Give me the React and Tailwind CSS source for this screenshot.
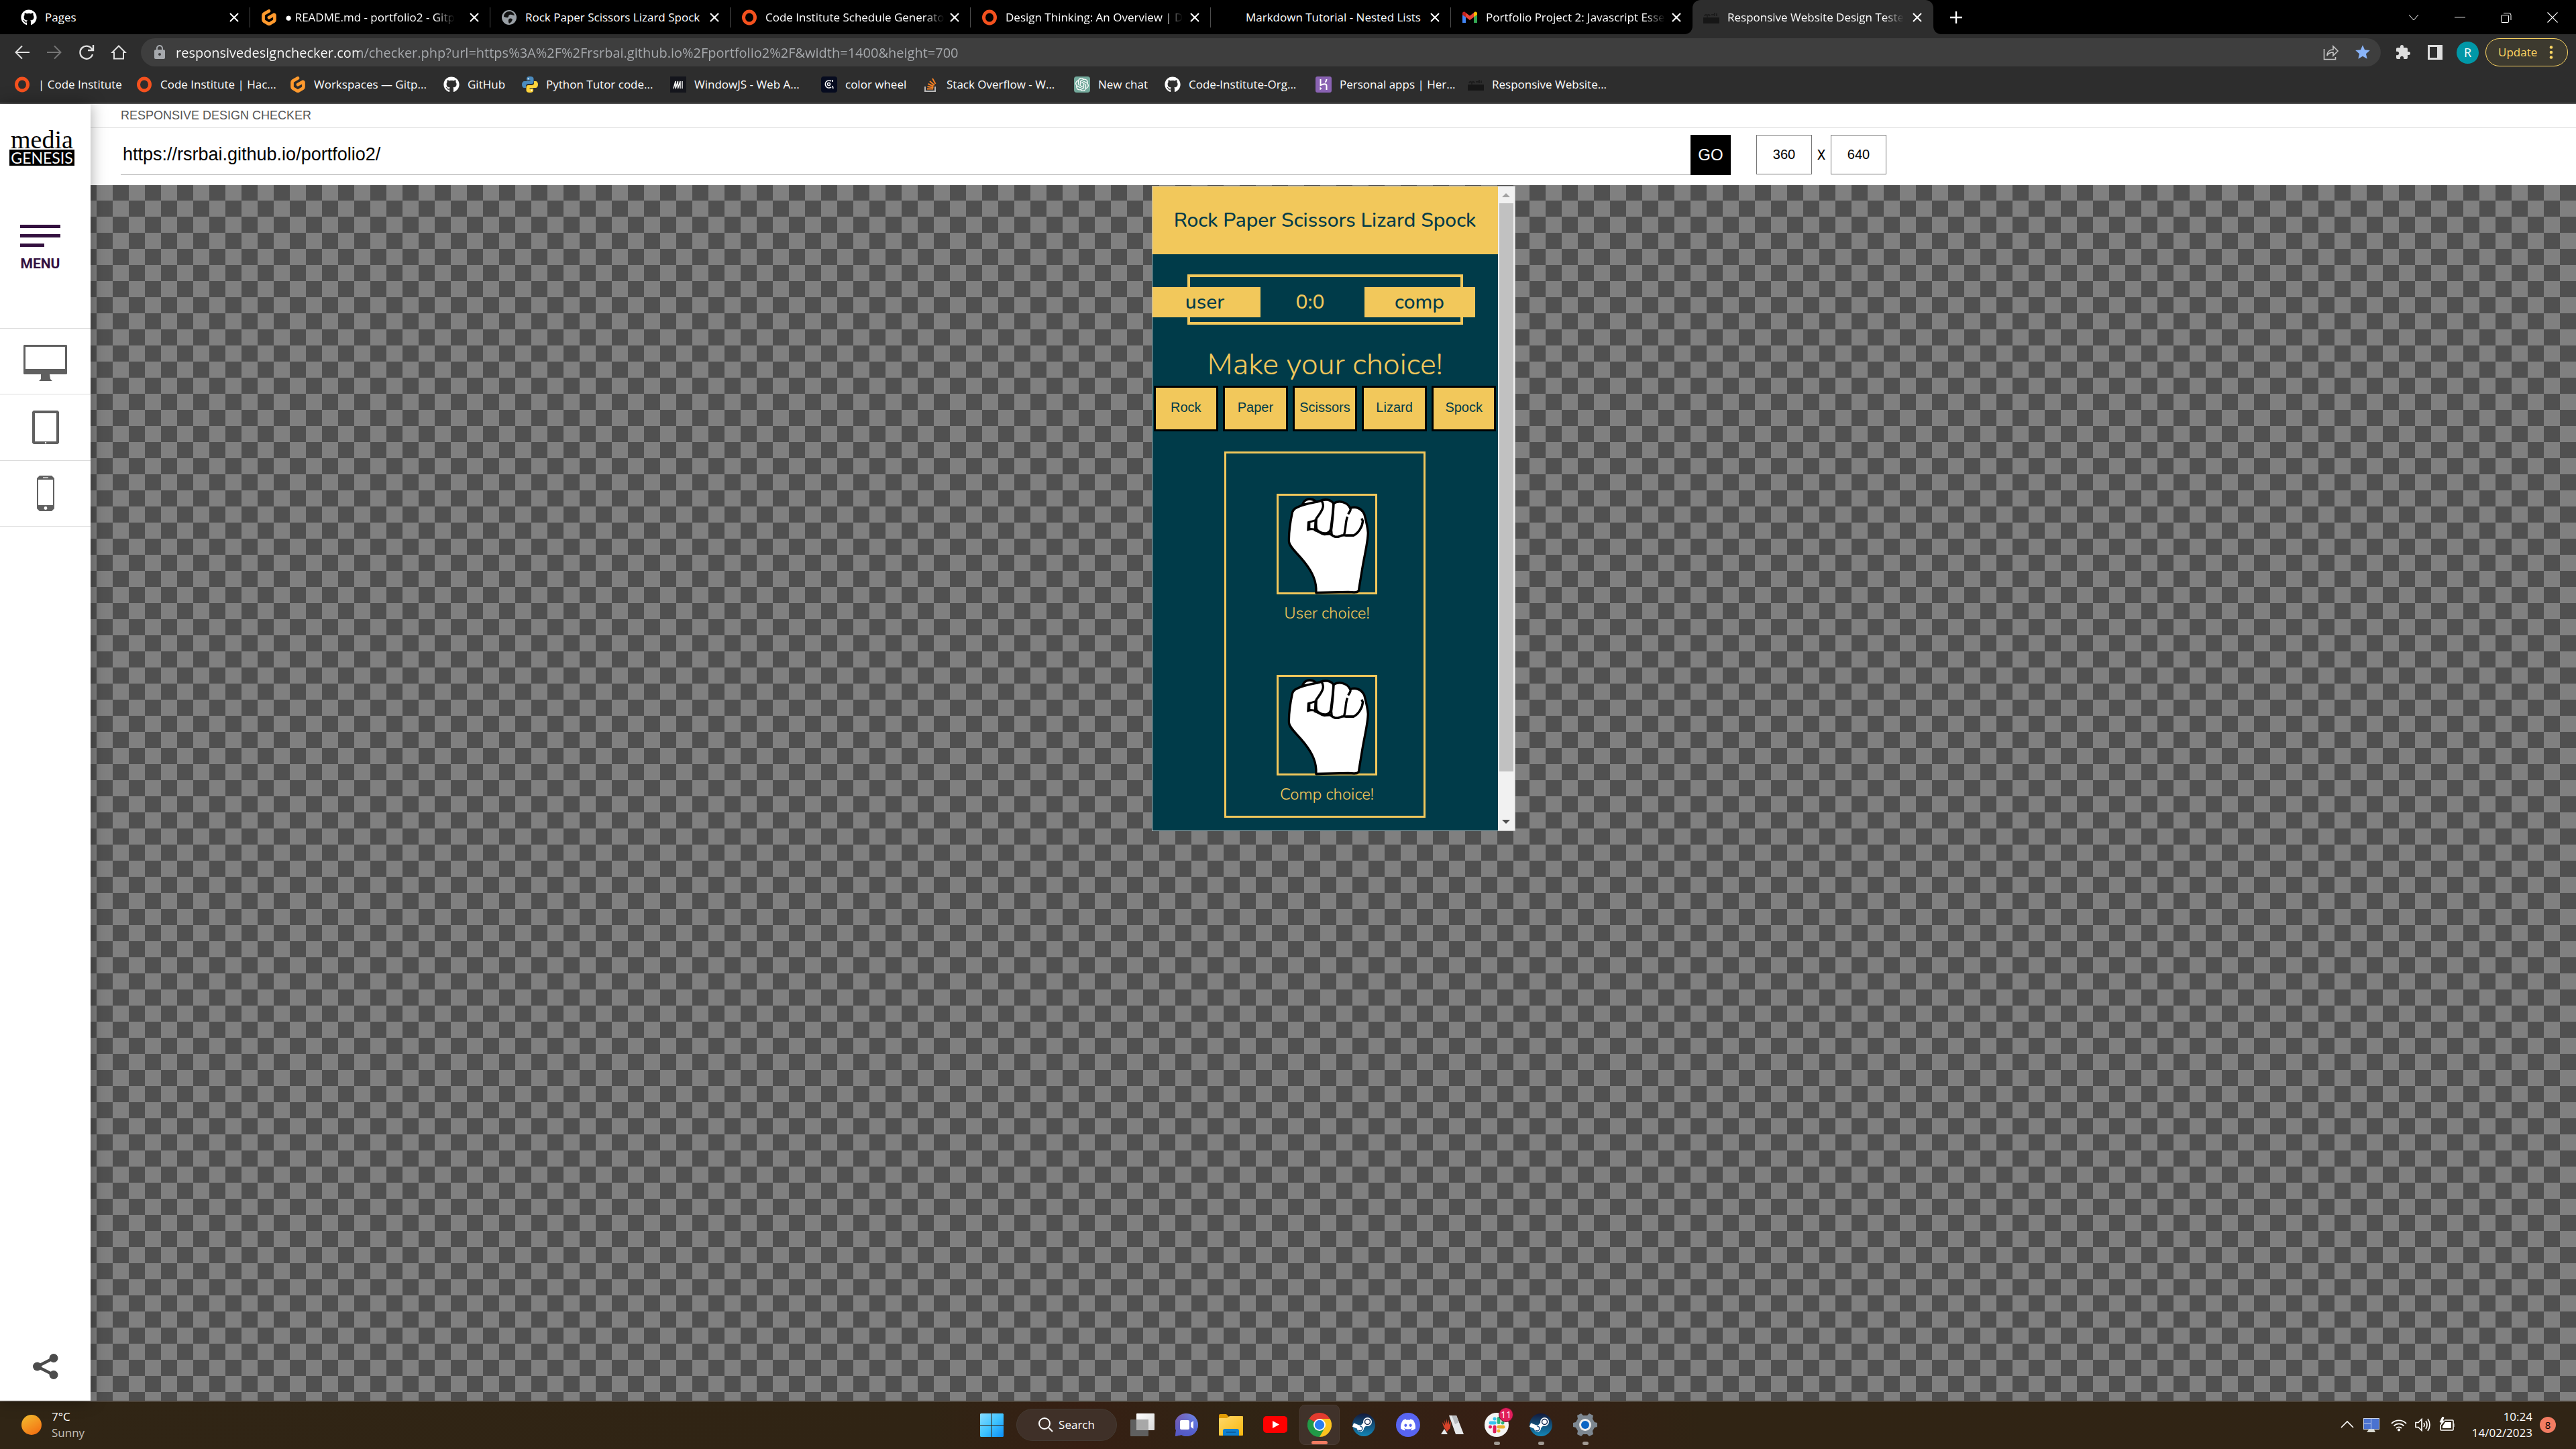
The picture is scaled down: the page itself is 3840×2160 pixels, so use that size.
import React from "react";
import { FaGithub, FaDiscord } from "react-icons/fa";
import { SiOpenai, SiGitpod } from "react-icons/si";
import { MdExtension, MdStar, MdLock } from "react-icons/md";

const UI = "font-['Segoe_UI','Open_Sans',sans-serif]";

/* ---------- favicons ---------- */
const Ring = () => (
  <svg viewBox="0 0 24 24" className="size-6 shrink-0">
    <ellipse cx="12" cy="12" rx="8.5" ry="9" fill="none" stroke="#f4511e" strokeWidth="5" />
  </svg>
);
const Github = () => <FaGithub className="size-6 shrink-0 text-white" />;
const Gitpod = () => <SiGitpod className="size-6 shrink-0 text-[#ff9a2e]" />;
const Globe = () => (
  <svg viewBox="0 0 24 24" className="size-6 shrink-0">
    <circle cx="12" cy="12" r="11" fill="#9aa0a6" />
    <path d="M12 3c4 0 7 2 8 6-3 0-4-2-7-1s-1 3-3 4-4-1-6-1c0-5 4-8 8-8zM12 14c3-1 4 0 5 1-1 3-2 4-5 6-1-2-2-5 0-7z" fill="#111" />
  </svg>
);
const Python = () => (
  <svg viewBox="0 0 24 24" className="size-6 shrink-0">
    <path d="M12 0C8 0 7 1.500 7 3.500V6h5.500v1H4C1.500 7 0 9 0 12s1.500 5 3.500 5H6v-3c0-2 1.500-3 3.500-3h5c2 0 3-1.500 3-3V3.500C17.500 1.500 16 0 12 0z" fill="#4b8bbe" />
    <path d="M12 24c4 0 5-1.500 5-3.500V18h-5.500v-1H20c2.500 0 4-2 4-5s-1.500-5-3.500-5H18v3c0 2-1.500 3-3.500 3h-5c-2 0-3 1.500-3 3v4.500C6.500 22.500 8 24 12 24z" fill="#ffd43b" />
    <circle cx="9.500" cy="3.500" r="1" fill="#fff" />
    <circle cx="14.500" cy="20.500" r="1" fill="#fff" />
  </svg>
);
const WindowJs = () => (
  <svg viewBox="0 0 24 24" className="size-6 shrink-0">
    <rect width="24" height="24" fill="#14151c" />
    <path d="M5 18 8 7v11l3.500-11v11L15 7v11M18 7v11" fill="none" stroke="#fff" strokeWidth="1.400" />
  </svg>
);
const Wheel = () => (
  <svg viewBox="0 0 24 24" className="size-6 shrink-0">
    <rect width="24" height="24" rx="4" fill="#060b1f" />
    <path d="M15 7a5.500 5.500 0 1 0 0 9M17 5v3M17 14l1 4" fill="none" stroke="#fff" strokeWidth="1.600" />
    <circle cx="11.500" cy="11.500" r="2" fill="none" stroke="#fff" strokeWidth="1.400" />
  </svg>
);
const Stack = () => (
  <svg viewBox="0 0 24 24" className="size-6 shrink-0" fill="none">
    <path d="M4 15v7h15v-7" stroke="#bcbbbb" strokeWidth="2" />
    <path d="M7 18.500h9M7.500 15l9 1.500M8.500 11l8 3.500M11 7l7 6M15 3l4.500 8" stroke="#f48024" strokeWidth="2" />
  </svg>
);
const Chat = () => (
  <span className="flex size-6 shrink-0 items-center justify-center rounded-sm bg-[#74aa9c]">
    <SiOpenai className="size-5 text-white" />
  </span>
);
const Heroku = () => (
  <svg viewBox="0 0 24 24" className="size-6 shrink-0">
    <rect width="24" height="24" rx="3" fill="#8a63b3" />
    <path d="M7.500 4v9c4-2 9-3 9 1v6M16.500 4c0 2-.8 3.500-2 5" fill="none" stroke="#fff" strokeWidth="2" />
    <path d="M6.500 15.500v5l3-2.500z" fill="#fff" />
  </svg>
);
const Media = () => (
  <svg viewBox="0 0 24 24" className="size-6 shrink-0">
    <path d="M2 10c1-3 3-3 4 0 1-3 3-3 4 0M12 8h4M17 5v5M20 6v4" stroke="#1c1c1c" strokeWidth="2" fill="none" />
    <rect y="12" width="24" height="9" fill="#161616" />
  </svg>
);
const Gmail = () => (
  <svg viewBox="0 0 24 24" className="size-6 shrink-0">
    <path d="M1 8v12h5V11z" fill="#4285f4" />
    <path d="M18 11v9h5V8z" fill="#34a853" />
    <path d="M1 8V6c0-2 2-3 4-2l1 1v6.500z" fill="#c5221f" />
    <path d="M18 5l1-1c2-1 4 0 4 2v2l-5 3.500z" fill="#fbbc04" />
    <path d="M6 5l6 4.500L18 5v6.500L12 16l-6-4.500z" fill="#ea4335" />
  </svg>
);
const Blank = () => <span className="size-6 shrink-0" />;

const tabs = [
  { icon: Github, title: "Pages" },
  { icon: Gitpod, title: "● README.md - portfolio2 - Gitp", fade: true },
  { icon: Globe, title: "Rock Paper Scissors Lizard Spock" },
  { icon: Ring, title: "Code Institute Schedule Generato", fade: true },
  { icon: Ring, title: "Design Thinking: An Overview | D", fade: true },
  { icon: Blank, title: "Markdown Tutorial - Nested Lists" },
  { icon: Gmail, title: "Portfolio Project 2: Javascript Esse", fade: true, last: true },
  { icon: Media, title: "Responsive Website Design Teste", fade: true, active: true },
];

const bookmarks = [
  { icon: Ring, title: "| Code Institute", w: "w-[182px]" },
  { icon: Ring, title: "Code Institute | Hac...", w: "w-[229px]" },
  { icon: Gitpod, title: "Workspaces — Gitp...", w: "w-[229px]" },
  { icon: Github, title: "GitHub", w: "w-[117px]" },
  { icon: Python, title: "Python Tutor code...", w: "w-[221px]" },
  { icon: WindowJs, title: "WindowJS - Web A...", w: "w-[225px]" },
  { icon: Wheel, title: "color wheel", w: "w-[151px]" },
  { icon: Stack, title: "Stack Overflow - W...", w: "w-[226px]" },
  { icon: Chat, title: "New chat", w: "w-[135px]" },
  { icon: Github, title: "Code-Institute-Org...", w: "w-[225px]" },
  { icon: Heroku, title: "Personal apps | Her...", w: "w-[227px]" },
  { icon: Media, title: "Responsive Website...", w: "w-[227px]" },
];

function CloseX() {
  return (
    <svg viewBox="0 0 14 14" className="size-3.5">
      <path d="M1 1l12 12M13 1 1 13" stroke="#fff" strokeWidth="2" />
    </svg>
  );
}

function Tab({ icon: Icon, title, active, last, fade }) {
  const size = active
    ? "relative w-[359px] rounded-t-xl bg-[#2d2d2d]"
    : last
      ? "w-[360px]"
      : "w-[358px]";
  return (
    <div className={"flex h-[51px] items-center justify-between " + size}>
      {active && (
        <>
          <svg viewBox="0 0 12 12" className="absolute bottom-0 -left-3 size-3">
            <path d="M12 0v12H0C7 12 12 7 12 0z" fill="#2d2d2d" />
          </svg>
          <svg viewBox="0 0 12 12" className="absolute -right-3 bottom-0 size-3">
            <path d="M0 0v12h12C5 12 0 7 0 0z" fill="#2d2d2d" />
          </svg>
        </>
      )}
      <button className="flex items-center gap-3 pl-4 text-left text-white">
        <Icon />
        <span
          className={
            fade
              ? "text-[17px] leading-6 whitespace-nowrap [mask-image:linear-gradient(90deg,#000_calc(100%-30px),transparent)]"
              : "text-[17px] leading-6 whitespace-nowrap"
          }
        >
          {title}
        </span>
      </button>
      <div className="flex items-center">
        <button aria-label={"Close " + title} className="mr-4">
          <CloseX />
        </button>
        <span className={active || last ? "h-[30px] w-px" : "h-[30px] w-px bg-[#4d4d4d]"} />
      </div>
    </div>
  );
}

function Stroke({ d, box = "0 0 24 24", className = "size-6", w = 2, color = "#e0e0e0" }) {
  return (
    <svg viewBox={box} className={className}>
      <path d={d} fill="none" stroke={color} strokeWidth={w} />
    </svg>
  );
}

function Browser() {
  return (
    <header className={"bg-[#2d2d2d] " + UI}>
      <div className="flex h-[51px] items-center bg-black pl-[15px]">
        {tabs.map((t) => (
          <Tab key={t.title} {...t} />
        ))}
        <button aria-label="New tab" className="ml-6">
          <Stroke d="M10 1v18M1 10h18" box="0 0 20 20" className="size-5" w={2.4} color="#fff" />
        </button>
        <div className="mr-[27px] ml-auto flex items-center gap-[53px]">
          <button aria-label="Search tabs">
            <Stroke d="M1 4l7 8 7-8" box="0 0 16 16" className="size-4" w={1} color="#fff" />
          </button>
          <button aria-label="Minimize">
            <Stroke d="M0 7.500h16" box="0 0 16 16" className="size-4" w={1} color="#fff" />
          </button>
          <button aria-label="Restore">
            <Stroke d="M1.500 4.500h9a1 1 0 0 1 1 1v9a1 1 0 0 1-1 1h-9a1 1 0 0 1-1-1v-9a1 1 0 0 1 1-1zM4 1.500h8a3 3 0 0 1 3 3V12" box="0 0 16 16" className="size-4" w={1} color="#fff" />
          </button>
          <button aria-label="Close window">
            <Stroke d="M.5.5l15 15M15.500.5l-15 15" box="0 0 16 16" className="size-4" w={1.2} color="#fff" />
          </button>
        </div>
      </div>

      <div className="flex h-[54px] items-center pr-3 pl-[21px]">
        <div className="flex w-[189px] items-center gap-6">
          <button aria-label="Back">
            <Stroke d="M12 2.500 2.500 12l9.500 9.500M3 12h20" />
          </button>
          <button aria-label="Forward">
            <Stroke d="M12 2.500 21.500 12 12 21.500M21 12H1" color="#757575" />
          </button>
          <button aria-label="Reload">
            <Stroke d="M20.500 8A9.500 9.500 0 1 0 21 15M22 1v8h-8" w={2.4} />
          </button>
          <button aria-label="Home">
            <Stroke d="M2.500 12 12 2.500l9.500 9.500H19v9.500H5V12z" />
          </button>
        </div>
        <div className="flex h-[42px] flex-1 items-center rounded-full bg-[#3e3e3e] pr-3.5 pl-4">
          <MdLock className="size-6 text-[#a6a9ad]" />
          <input
            aria-label="Address and search bar"
            defaultValue="responsivedesignchecker.com/checker.php?url=https%3A%2F%2Frsrbai.github.io%2Fportfolio2%2F&width=1400&height=700"
            className="ml-3 h-full min-w-0 flex-1 bg-[linear-gradient(90deg,#fff_274px,#a9acb0_274px)] bg-clip-text text-[20px] text-transparent outline-none"
          />
          <div className="flex items-center gap-[22px]">
            <button aria-label="Share">
              <Stroke d="M1.500 7v15.500h17V19M6 17c0-6 4-9 9-9V3l7 7-7 7v-5c-4 0-7 1-9 5z" w={1.6} color="#c7c7c7" />
            </button>
            <button aria-label="Bookmark this tab">
              <MdStar className="size-[26px] text-[#8ab4f8]" />
            </button>
          </div>
        </div>
        <div className="ml-[21px] flex items-center gap-6">
          <button aria-label="Extensions">
            <MdExtension className="size-6 text-[#dedede]" />
          </button>
          <button aria-label="Side panel">
            <svg viewBox="0 0 24 24" className="size-6">
              <path d="M1 1h22v22H1zM4 4v16h11V4z" fillRule="evenodd" fill="#dedede" />
            </svg>
          </button>
          <button className="-ml-1 flex size-[33px] items-center justify-center rounded-full bg-[#0097a7] text-[18px] leading-6 text-white">R</button>
        </div>
        <button className="ml-2.5 flex h-[42px] w-[123px] items-center gap-[18px] rounded-full border border-[#fdd663] bg-[#3d3a2f] pl-[18px] text-[17px] text-[#fdd663]">
          <span>Update</span>
          <svg viewBox="0 0 6 20" className="h-5 w-1.5" fill="#fdd663">
            <circle cx="3" cy="2.500" r="2.300" />
            <circle cx="3" cy="10" r="2.300" />
            <circle cx="3" cy="17.500" r="2.300" />
          </svg>
        </button>
      </div>

      <nav className="flex h-[50px] items-center border-b-2 border-[#505050] pb-1.5 pl-[21px]">
        {bookmarks.map(({ icon: Icon, title, w }) => (
          <a key={title} href="#bookmark" className={"flex items-center gap-3 text-[17px] leading-6 whitespace-nowrap text-white " + w}>
            <Icon />
            {title}
          </a>
        ))}
      </nav>
    </header>
  );
}

/* ---------- checker page ---------- */
function Sidebar() {
  return (
    <aside className="relative z-10 flex w-[135px] shrink-0 flex-col bg-white shadow-[0_0_22px_rgba(0,0,0,0.35)]">
      <a href="#home" className="mt-[38px] ml-3.5 flex w-[97px] flex-col items-center">
        <span className="font-['Liberation_Serif',serif] text-[38px] leading-[30px] text-black">media</span>
        <span className="flex h-6 w-full items-center justify-center bg-black font-['Lato',sans-serif] text-[23px] leading-6 text-white">GENESIS</span>
      </a>
      <button className="mt-[88px] ml-[30px] flex w-[60px] flex-col text-[#33103f]">
        <span className="h-[5px] w-full bg-[#33103f]" />
        <span className="mt-[9px] h-[5px] w-full bg-[#33103f]" />
        <span className="mt-[9px] h-[5px] w-9 bg-[#33103f]" />
        <span className="mt-[13px] font-['Roboto',sans-serif] text-[21px] leading-6 font-bold">MENU</span>
      </button>
      <div className="mt-[84px] flex flex-col border-t border-[#dcdcdc]">
        <button aria-label="Desktop" className="flex h-[98px] items-center justify-center border-b border-[#dcdcdc] pt-1">
          <svg viewBox="0 0 65 54" className="h-[54px] w-[65px]" fill="#606060">
            <path d="M1 0h63l1 1v42l-1 1H1l-1-1V1zM3 3v33h59V3z" fillRule="evenodd" />
            <path d="M26 44h13l1 7 3 3H23l3-3z" />
          </svg>
        </button>
        <button aria-label="Tablet" className="flex h-[99px] items-center justify-center border-b border-[#dcdcdc]">
          <svg viewBox="0 0 40 50" className="h-[50px] w-10" fill="#606060">
            <path d="M2 0h36l2 2v46l-2 2H2l-2-2V2zM4 4v42h32V4z" fillRule="evenodd" />
            <circle cx="20" cy="48" r="1.200" fill="#fff" />
          </svg>
        </button>
        <button aria-label="Phone" className="flex h-[98px] items-center justify-center border-b border-[#dcdcdc]">
          <svg viewBox="0 0 26 53" className="h-[53px] w-[26px]" fill="#606060">
            <path d="M4 0h18l4 4v45l-4 4H4l-4-4V4zM2 6v38h22V6z" fillRule="evenodd" />
            <path d="M9 3h8" stroke="#fff" strokeWidth="1.200" />
            <circle cx="13" cy="48.500" r="2.400" fill="#fff" />
          </svg>
        </button>
      </div>
      <button aria-label="Share this page" className="mt-auto mb-8 ml-[49px] self-start">
        <svg viewBox="0 0 38 38" className="size-[38px]">
          <path d="M31 6.500 6.500 19 31 31.500" fill="none" stroke="#4c4c4c" strokeWidth="4.500" />
          <g fill="#4c4c4c">
            <circle cx="31" cy="6.500" r="6.500" />
            <circle cx="6.500" cy="19" r="6.500" />
            <circle cx="31" cy="31.500" r="6.500" />
          </g>
        </svg>
      </button>
    </aside>
  );
}

function Fist() {
  return (
    <svg viewBox="552 243 405 379" preserveAspectRatio="none" className="-m-[3px] size-[150px]">
      <g stroke="#000" strokeWidth="9" fill="#fff" strokeLinejoin="round">
        <path d="M656 284C664 262 688 257 708 270L716 280z" />
        <path d="M711 616V600C709 562 690 528 650 485C624 457 603 440 602 424C600 384 607 350 615 314C619 300 630 296 645 290C670 280 700 277 728 270C745 262 770 264 781 280C800 267 835 272 848 297C870 289 895 298 905 320C912 345 918 365 920 390C919 430 904 480 896 530C889 570 884 596 883 606C880 616 866 615 840 613L740 615Z" />
      </g>
      <g stroke="#000" strokeWidth="9" fill="none" strokeLinecap="butt">
        <path d="M733 270C748 288 735 308 712 336C712 350 709 362 713 376C720 387 736 394 752 392C764 390 768 382 770 376C774 345 780 310 781 280" />
        <path d="M781 280C781 320 776 350 772 380L774 398" />
        <path d="M702 379C722 383 735 397 745 396L768 394C780 404 792 408 804 404C812 400 822 398 832 400L862 400C880 392 898 368 899 345L894 336" />
        <path d="M848 294C852 304 848 308 840 320" />
        <path d="M837 330C828 352 832 372 823 400" />
      </g>
      <path d="M712 334C705 344 694 342 676 348L674 384C692 378 704 380 716 384z" fill="#000" />
      <path d="M688 353L704 348 703 373 688 372z" fill="#fff" />
    </svg>
  );
}

function Choice({ label }) {
  return (
    <figure className="flex flex-col items-center">
      <div className="size-[150px] border-[3px] border-[#f2c85b]">
        <Fist />
      </div>
      <figcaption className="mt-3 text-[24px] leading-8 font-light">{label}</figcaption>
    </figure>
  );
}

function Game() {
  return (
    <section className="flex h-[962px] w-[542px] border border-[#b8b8b8] font-['Nunito','Open_Sans',sans-serif] text-[#f2c85b]">
      <div className="flex-1 bg-[#003b49]">
        <h1 className="flex h-[101px] items-center justify-center bg-[#f2c85b] text-[30px] font-medium whitespace-nowrap text-[#003b49]">
          Rock Paper Scissors Lizard Spock
        </h1>
        <div className="mx-[52px] mt-[30px] flex h-[75px] items-start border-4 border-[#f2c85b] pt-[15px] text-[30px] leading-[45px] font-medium">
          <div className="-mr-[22px] -ml-14 flex flex-1 justify-between">
            <span className="w-[161px] bg-[#f2c85b] pr-1 text-center text-[#003b49]">user</span>
            <span className="pr-1.5">0:0</span>
            <span className="w-[165px] bg-[#f2c85b] text-center text-[#003b49]">comp</span>
          </div>
        </div>
        <h2 className="mt-[33px] text-center text-[45px] leading-[54px] font-light">Make your choice!</h2>
        <div className="mt-1 grid grid-cols-5 gap-[7px] px-0.5">
          {["Rock", "Paper", "Scissors", "Lizard", "Spock"].map((c) => (
            <button key={c} className="h-[68px] border-[3px] border-black bg-[#f2c85b] pb-1 font-['Liberation_Sans',sans-serif] text-[20px] text-[#003b49]">
              {c}
            </button>
          ))}
        </div>
        <div className="mx-auto mt-[30px] flex h-[546px] w-[300px] flex-col items-center gap-[76px] border-[3px] border-[#f2c85b] pt-[60px] pl-1.5">
          <Choice label="User choice!" />
          <Choice label="Comp choice!" />
        </div>
      </div>
      <div className="flex w-[25px] flex-col items-center bg-[#f1f1f1] py-2.5">
        <svg viewBox="0 0 12 6" className="h-1.5 w-3"><path d="M0 6 6 0l6 6z" fill="#a3a3a3" /></svg>
        <div className="mt-[9px] h-[847px] w-[21px] bg-[#c1c1c1]" />
        <svg viewBox="0 0 12 6" className="mt-auto h-1.5 w-3"><path d="M0 0l6 6 6-6z" fill="#505050" /></svg>
      </div>
    </section>
  );
}

function Checker() {
  return (
    <div className="flex min-w-0 flex-1 flex-col font-['Liberation_Sans',sans-serif]">
      <div className="bg-white">
        <h2 className="h-9 border-b border-[#dcdcdc] pl-[45px] text-[18px] leading-[35px] text-[#555]">RESPONSIVE DESIGN CHECKER</h2>
        <form className="grid h-[85px] grid-cols-[40fr_21fr] items-start pt-2.5 pl-[45px]" onSubmit={(e) => e.preventDefault()}>
          <div className="flex">
            <input
              aria-label="Website address"
              defaultValue="https://rsrbai.github.io/portfolio2/"
              className="h-[60px] min-w-0 flex-1 border-b border-[#b2b2b2] pl-[3px] text-[27px] text-black outline-none"
            />
            <button className="h-[60px] w-[60px] bg-black text-[24px] text-white">GO</button>
          </div>
          <div className="flex items-center pl-[38px] text-[20px]">
            <input aria-label="Width" defaultValue="360" className="h-[59px] w-[83px] border border-[#767676] text-center text-black outline-none" />
            <span className="w-7 text-center font-['Roboto',sans-serif] text-black">X</span>
            <input aria-label="Height" defaultValue="640" className="h-[59px] w-[83px] border border-[#767676] text-center text-black outline-none" />
          </div>
        </form>
      </div>
      <div className="flex flex-1 items-start justify-center bg-[conic-gradient(#505050_25%,#808080_0_50%,#505050_0_75%,#808080_0)] bg-size-[48px_48px] bg-position-[33px_23px] pt-px">
        <Game />
      </div>
    </div>
  );
}

/* ---------- taskbar ---------- */
const Steam = () => (
  <svg viewBox="0 0 34 34" className="size-[34px]">
    <defs>
      <linearGradient id="steam" x2="0" y2="1">
        <stop offset="0" stopColor="#131a3c" />
        <stop offset="1" stopColor="#1387b8" />
      </linearGradient>
    </defs>
    <circle cx="17" cy="17" r="17" fill="url(#steam)" />
    <path d="M1 17l12 5 8-9" stroke="#fff" strokeWidth="6" fill="none" />
    <circle cx="22.500" cy="12.500" r="6.500" fill="#fff" />
    <circle cx="22.500" cy="12.500" r="4" fill="none" stroke="#16294f" strokeWidth="1.500" />
    <circle cx="12" cy="22.500" r="5" fill="#fff" />
    <path d="M9 25a3.500 3.500 0 1 0 2-6" fill="none" stroke="#14457a" strokeWidth="1.300" />
  </svg>
);

const apps = [
  {
    name: "Task view",
    art: (
      <svg viewBox="0 0 36 34" className="h-[34px] w-9">
        <defs>
          <linearGradient id="tv" x2="1" y2="1"><stop stopColor="#fff" /><stop offset="1" stopColor="#d9d9d9" /></linearGradient>
        </defs>
        <rect x="9" width="27" height="25" rx="1" fill="url(#tv)" />
        <rect y="9" width="27" height="25" rx="1" fill="#5f5f5f" />
        <rect x="9" y="9" width="18" height="16" fill="#a8a8a8" />
      </svg>
    ),
  },
  {
    name: "Chat",
    art: (
      <svg viewBox="0 0 34 34" className="size-[34px]">
        <defs>
          <linearGradient id="ch" x2="1" y2="0"><stop stopColor="#7d5aa8" /><stop offset="1" stopColor="#6a8df0" /></linearGradient>
          <linearGradient id="ch2" x2="0" y2="1"><stop stopColor="#5059c9" stopOpacity="0" /><stop offset="1" stopColor="#5059c9" /></linearGradient>
        </defs>
        <path d="M17 0a17 17 0 1 1-8 32L0 34l1-9A17 17 0 0 1 17 0z" fill="url(#ch)" />
        <path d="M17 0a17 17 0 1 1-8 32L0 34l1-9A17 17 0 0 1 17 0z" fill="url(#ch2)" />
        <rect x="7" y="10" width="14" height="14" rx="2" fill="#fff" />
        <path d="M23 14l4-3v12l-4-3z" fill="#fff" />
      </svg>
    ),
  },
  {
    name: "File Explorer",
    art: (
      <svg viewBox="0 0 36 32" className="h-8 w-9">
        <defs>
          <linearGradient id="fo" x2="1" y2="1"><stop stopColor="#ffd96b" /><stop offset="1" stopColor="#f9b70e" /></linearGradient>
        </defs>
        <path d="M0 2a2 2 0 0 1 2-2h9l4 4v8H0z" fill="#e19c05" />
        <path d="M0 7q0-1 1-1h11l4-3h19q1 0 1 1v27q0 1-1 1H1q-1 0-1-1z" fill="url(#fo)" />
        <path d="M6 32v-7q0-3 3-3h18q3 0 3 3v7z" fill="#1080d0" />
        <path d="M11 27h14" stroke="#0c5593" strokeWidth="1.500" />
      </svg>
    ),
  },
  {
    name: "YouTube",
    art: (
      <svg viewBox="0 0 36 26" className="h-[26px] w-9">
        <rect width="36" height="25" rx="5" fill="#f00" />
        <path d="M14 7l10 5.500L14 18z" fill="#fff" />
      </svg>
    ),
  },
  {
    name: "Google Chrome",
    focus: true,
    dot: "h-[5px] w-6 rounded-full bg-[#f27c62]",
    art: (
      <svg viewBox="0 0 36 36" className="size-9">
        <path d="M18 18 2.400 9A18 18 0 0 1 33.600 9z" fill="#e33b2e" />
        <path d="M18 18V9h15.600A18 18 0 0 1 18 36z" fill="#fcc31e" />
        <path d="M18 18l7.800 4.500L18 36A18 18 0 0 1 2.400 9z" fill="#219a47" />
        <circle cx="18" cy="18" r="9" fill="#fff" />
        <circle cx="18" cy="18" r="7.200" fill="#2a7df0" />
      </svg>
    ),
  },
  { name: "Steam", art: <Steam /> },
  {
    name: "Discord",
    art: (
      <span className="flex size-9 items-center justify-center rounded-full bg-[#5865f2]">
        <FaDiscord className="size-6 text-white" />
      </span>
    ),
  },
  {
    name: "Magic Arena",
    art: (
      <svg viewBox="0 0 34 28" className="h-7 w-[34px]">
        <path d="M12 0h11l11 28H22zM5 20l5 8H0z" fill="#e6e8ea" />
        <path d="M16 0h7l4 10-6 3z" fill="#b9bbbf" />
        <path d="M2 10l4 5-1-8 3 7 0-9 2 8 2-7 0 8 3-6-1 9c0 4-4 4-5 8-1-4-5-5-7-15z" fill="#d8432a" />
      </svg>
    ),
  },
  {
    name: "Slack",
    badge: "11",
    dot: "h-[5px] w-[9px] rounded-full bg-[#a19a93]",
    art: (
      <svg viewBox="0 0 36 36" className="size-9" strokeWidth="5" strokeLinecap="round">
        <circle cx="18" cy="18" r="18" fill="#f5f5f5" />
        <path d="M9 15h6M15 9v0" stroke="#36c5f0" />
        <path d="M21 8.500v6M27 15v0" stroke="#2eb67d" />
        <path d="M21 21h7M21 27v0" stroke="#ecb22e" />
        <path d="M15 21v7M8.500 21v0" stroke="#e01e5a" />
      </svg>
    ),
  },
  { name: "Steam games", art: <Steam />, dot: "h-[5px] w-[9px] rounded-full bg-[#a19a93]" },
  {
    name: "Settings",
    dot: "h-[5px] w-[9px] rounded-full bg-[#a19a93]",
    art: (
      <svg viewBox="0 0 36 36" className="size-9">
        <path d="M12 1l3 3h6l3-3 6 3-1 5 3 5 4 1v6l-4 1-3 5 1 5-6 3-3-3h-6l-3 3-6-3 1-5-3-5-4-1v-6l4-1 3-5-1-5z" fill="#7d8791" />
        <circle cx="18" cy="18" r="9" fill="#ededed" />
        <circle cx="18" cy="18" r="6" fill="#0a64c4" />
      </svg>
    ),
  },
];

function Taskbar() {
  return (
    <footer
      className={
        "grid h-[72px] grid-cols-[1fr_auto_1fr] items-center border-t-2 border-[#4d443a] bg-[linear-gradient(90deg,#302515_0%,#302414_36%,#361f13_42%,#302414_48%,#361f14_58%,#302414_66%,#302415_100%)] text-white " + UI
      }
    >
      <button className="flex items-center gap-[15px] pb-0.5 pl-8 text-left text-[17px] leading-6">
        <span className="size-[30px] rounded-full bg-linear-150 from-[#f0bf30] to-[#f2640c]" />
        <span className="flex flex-col">
          <span>7°C</span>
          <span className="text-[#c4bfb9]">Sunny</span>
        </span>
      </button>

      <div className="flex items-center pb-0.5 pl-[17px]">
        <button aria-label="Start" className="mr-[19px]">
          <svg viewBox="0 0 35 35" className="size-[35px]">
            <defs>
              <linearGradient id="win" gradientUnits="userSpaceOnUse" x2="35" y2="35"><stop stopColor="#8adcff" /><stop offset=".5" stopColor="#3fc4ff" /><stop offset="1" stopColor="#0b8ef8" /></linearGradient>
            </defs>
            <path d="M1 0h16v17H0V1zM18 0h16l1 1v16H18zM0 18h17v17H1l-1-1zM18 18h17v16l-1 1H18z" fill="url(#win)" />
          </svg>
        </button>
        <button className="mr-[5px] flex h-12 w-[150px] items-center justify-center gap-2 rounded-full border border-[#443a32] bg-[#3f3028] text-[17px]">
          <Stroke d="M15.500 15.500 21 21M17 9A8 8 0 1 1 1 9a8 8 0 0 1 16 0z" box="0 0 22 22" className="size-[22px]" w={2} color="#fff" />
          Search
        </button>
        {apps.map((a) => (
          <button
            key={a.name}
            aria-label={a.name}
            className={
              a.focus
                ? "relative mx-[3px] flex h-[60px] w-[60px] items-center justify-center rounded-lg border border-[#4a3c33] bg-[#40322a]"
                : "relative flex h-[60px] w-[66px] items-center justify-center"
            }
          >
            {a.art}
            {a.dot && (
              <span className="absolute inset-x-0 bottom-0 flex justify-center">
                <span className={a.dot} />
              </span>
            )}
            {a.badge && (
              <span className="absolute top-1 right-2 flex size-[22px] items-center justify-center rounded-full border border-[#5b1226] bg-[#e01e5a] text-[14px] leading-4">
                {a.badge}
              </span>
            )}
          </button>
        ))}
      </div>

      <div className="flex items-center justify-end pr-[30px] pb-0.5">
        <button aria-label="Show hidden icons" className="mr-3.5">
          <Stroke d="M1 14l9-9 9 9" box="0 0 20 20" className="size-5" w={1.6} color="#fff" />
        </button>
        <button aria-label="Display" className="mr-[17px]">
          <svg viewBox="0 0 24 24" className="size-6">
            <rect y="2" width="24" height="17" fill="#c8d4ea" />
            <path d="M1 3h10v7H1zM12 3h11v15H12zM1 11h10v7H1z" fill="#4a72d0" />
            <path d="M8 19h8l2 4H5z" fill="#d8d8d0" />
          </svg>
        </button>
        <button aria-label="Network, volume and battery" className="mr-[25px] flex items-center gap-3">
          <svg viewBox="0 0 24 24" className="size-6" fill="none" stroke="#fff" strokeWidth="1.800">
            <path d="M1 10a15.500 15.500 0 0 1 22 0M4.500 13.500a10.600 10.600 0 0 1 15 0M8 17a5.600 5.600 0 0 1 8 0" />
            <circle cx="12" cy="19.500" r="1.200" fill="#fff" />
          </svg>
          <svg viewBox="0 0 24 24" className="size-6" fill="none" stroke="#fff" strokeWidth="1.700">
            <path d="M1 8.500h4l5-5v17l-5-5H1zM13 9q2 3 0 6M16 6q4 6 0 12M19 3q6 9 0 18" />
          </svg>
          <svg viewBox="0 0 24 24" className="size-6" fill="none" stroke="#fff" strokeWidth="1.600">
            <path d="M8 5h12q1 0 1 1v13q0 1-1 1H3q-1 0-1-1v-7" />
            <path d="M9 8h9v9H5v-3z" fill="#fff" stroke="none" />
            <path d="M22 10v5M5 0 1 8h3L2 13l6-7H5l2-5z" fill="#fff" strokeWidth="1" />
          </svg>
        </button>
        <button className="mr-[11px] flex flex-col text-right text-[17px] leading-6">
          <span>10:24</span>
          <span>14/02/2023</span>
        </button>
        <span className="flex size-6 items-center justify-center rounded-full bg-[#f27c62] text-[15px] leading-5 text-black">8</span>
      </div>
    </footer>
  );
}

export default function App() {
  return (
    <div className="flex min-h-screen flex-col">
      <Browser />
      <main className="flex flex-1">
        <Sidebar />
        <Checker />
      </main>
      <Taskbar />
    </div>
  );
}
